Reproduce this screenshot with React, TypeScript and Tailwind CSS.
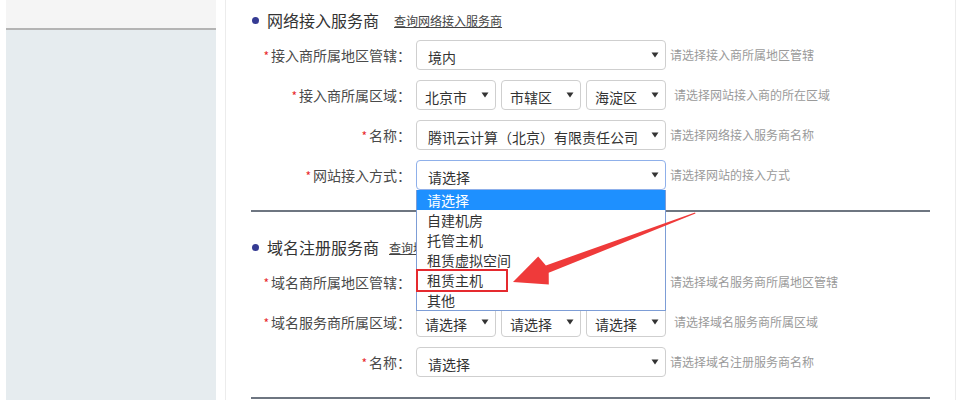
import React from 'react';

type Row = {
  label: string;
  values: string[];
  hint: string;
  hintGap?: string;
  focused?: boolean;
};

const Arrow = () => (
  <svg width="8" height="6" viewBox="0 0 8 6" className="shrink-0">
    <path d="M0.5 0.5 L7.5 0.5 L4 5.5 Z" fill="#333" />
  </svg>
);

const SelectBox: React.FC<{ value: string; small?: boolean; focused?: boolean }> = ({ value, small, focused }) => (
  <div
    className={`h-[30px] flex items-center justify-between rounded-[4px] border bg-white text-[14px] text-[#333] ${
      small ? 'w-[80px] pl-[8px] pr-[6px]' : 'w-[250px] pl-[11px] pr-[6px]'
    } ${focused ? 'border-[#8fb0ea]' : 'border-[#cfcfcf]'}`}
  >
    <span className="pt-[3px] leading-[20px] whitespace-nowrap">{value}</span>
    <Arrow />
  </div>
);

const Dropdown = () => {
  const items = ['请选择', '自建机房', '托管主机', '租赁虚拟空间', '租赁主机', '其他'];
  return (
    <div className="absolute left-0 top-[30px] w-[250px] border border-[#7d9dd6] border-t-0 bg-white z-10">
      {items.map((it, i) => (
        <div
          key={it}
          className={`h-[20px] pl-[10px] text-[14px] leading-[20px] ${
            i === 0 ? 'bg-[#1e90ff] text-white' : 'text-[#333]'
          }`}
        >
          {it}
        </div>
      ))}
      {/* red highlight box */}
      <div className="absolute left-[-1px] top-[79px] w-[92px] h-[23px] border-2 border-[#e52a2f]" />
    </div>
  );
};

const FormRow: React.FC<{ row: Row; dropdown?: boolean }> = ({ row, dropdown }) => (
  <div className="flex items-center h-[30px] mt-[10px]">
    <div className="w-[160px] text-right text-[14px] text-[#4a4a4a] leading-[20px] whitespace-nowrap">
      <span className="text-[#e8262c] text-[12px] mr-[2px]">*</span>
      {row.label}：
    </div>
    <div className="relative ml-[5px]">
      {row.values.length > 1 ? (
        <div className="flex gap-[5px]">
          {row.values.map((v, i) => (
            <SelectBox key={i} value={v} small />
          ))}
        </div>
      ) : (
        <SelectBox value={row.values[0]} focused={row.focused} />
      )}
      {dropdown && <Dropdown />}
    </div>
    <div className={`${row.hintGap ?? 'ml-[4px]'} text-[12px] text-[#9a9a9a] whitespace-nowrap`}>{row.hint}</div>
  </div>
);

const Section: React.FC<{
  title: string;
  link: string;
  linkGap: string;
  rows: Row[];
  dropdownAt?: number;
  first?: boolean;
}> = ({ title, link, linkGap, rows, dropdownAt, first }) => (
  <div className={first ? 'pt-[10px]' : 'pt-[25px]'}>
    <div className="flex items-center h-[20px]">
      <span className="ml-[1px] w-[7px] h-[7px] rounded-full bg-[#353b93]" />
      <span className="ml-[8px] text-[16px] leading-[20px] text-[#333]">{title}</span>
      <a className={`${linkGap} text-[12px] text-[#444] underline pt-[2px]`}>{link}</a>
    </div>
    <div className="mt-[1px]">
      {rows.map((r, i) => (
        <FormRow key={r.label + i} row={r} dropdown={dropdownAt === i} />
      ))}
    </div>
    <div className="mt-[20px] w-[679px] h-[2px] bg-[#6e7681]" />
  </div>
);

export default function App() {
  const netRows: Row[] = [
    { label: '接入商所属地区管辖', values: ['境内'], hint: '请选择接入商所属地区管辖' },
    { label: '接入商所属区域', values: ['北京市', '市辖区', '海淀区'], hint: '请选择网站接入商的所在区域', hintGap: 'ml-[8px]' },
    { label: '名称', values: ['腾讯云计算（北京）有限责任公司'], hint: '请选择网络接入服务商名称' },
    { label: '网站接入方式', values: ['请选择'], hint: '请选择网站的接入方式', focused: true },
  ];
  const domainRows: Row[] = [
    { label: '域名商所属地区管辖', values: ['境内'], hint: '请选择域名服务商所属地区管辖' },
    { label: '域名服务商所属区域', values: ['请选择', '请选择', '请选择'], hint: '请选择域名服务商所属区域', hintGap: 'ml-[8px]' },
    { label: '名称', values: ['请选择'], hint: '请选择域名注册服务商名称' },
  ];

  return (
    <div className="relative flex h-[400px] w-[960px] overflow-hidden bg-white font-['Noto_Sans_CJK_SC',sans-serif]">
      {/* left side panel */}
      <div className="ml-[6px] w-[210px] flex flex-col">
        <div className="h-[30px] bg-[#f5f5f5] border-b-2 border-[#b4b4b4]" />
        <div className="flex-1 bg-[#e6ecef]" />
      </div>
      <div className="w-[9px]" />
      {/* main content */}
      <div className="w-[731px] border-l border-r border-[#ececec] pl-[25px]">
        <Section first title="网络接入服务商" link="查询网络接入服务商" linkGap="ml-[15px]" rows={netRows} dropdownAt={3} />
        <Section title="域名注册服务商" link="查询域名注册服务商" linkGap="ml-[10px]" rows={domainRows} />
      </div>

      {/* annotation arrow */}
      <svg className="absolute left-0 top-0 pointer-events-none z-20" width="960" height="400">
        <polygon
          points="695,212.4 695.5,213.6 548.7,272.8 548.8,284.5 513,282 538.2,256.5 545.9,265.4"
          fill="#ef3a3a"
        />
      </svg>
    </div>
  );
}
